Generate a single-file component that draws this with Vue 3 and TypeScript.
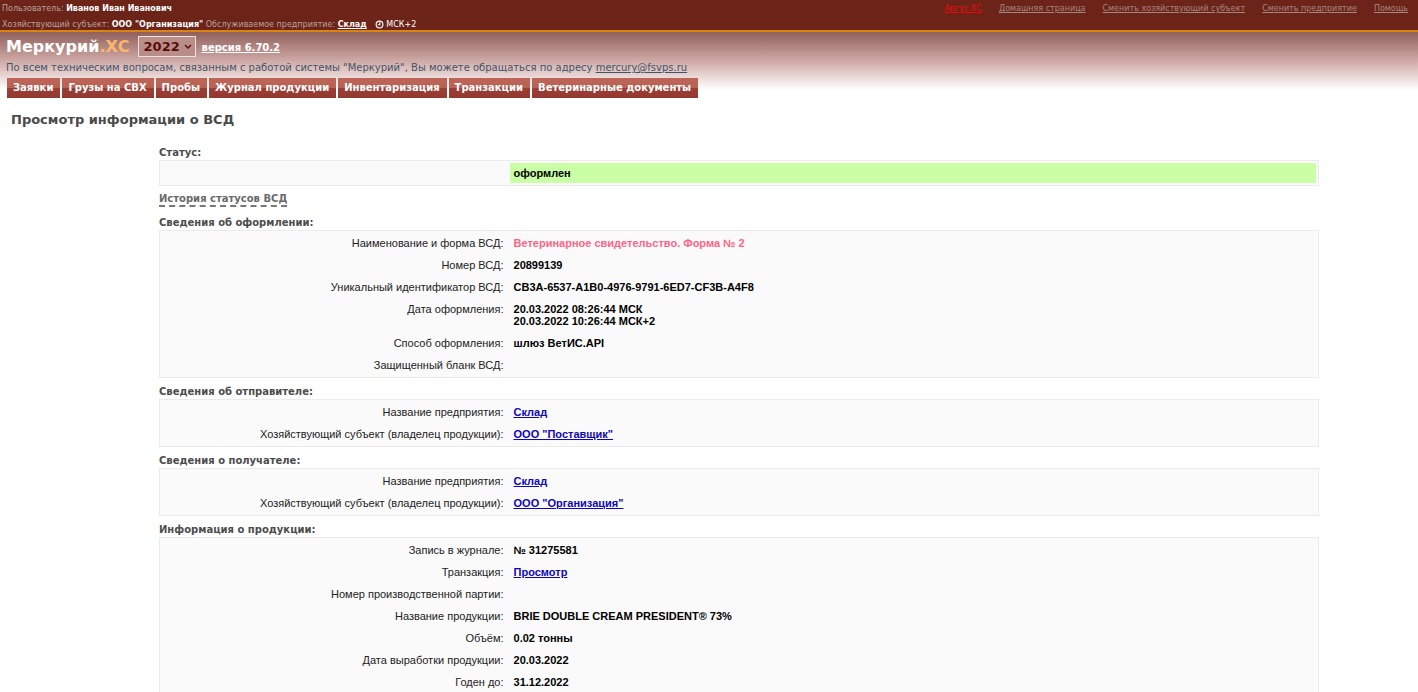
<script setup lang="ts">
import { ref } from 'vue'

interface Row {
  label: string
  lines: string[]
  kind?: 'link' | 'form' | 'status'
}

interface Section {
  title: string
  rows: Row[]
}

const year = ref('2022')
const years = ['2022', '2021', '2020']

const serviceLinks = [
  { text: 'Аргус.ХС', accent: true },
  { text: 'Домашняя страница', accent: false },
  { text: 'Сменить хозяйствующий субъект', accent: false },
  { text: 'Сменить предприятие', accent: false },
  { text: 'Помощь', accent: false },
]

const menu = [
  'Заявки',
  'Грузы на СВХ',
  'Пробы',
  'Журнал продукции',
  'Инвентаризация',
  'Транзакции',
  'Ветеринарные документы',
]

const status: Section = {
  title: 'Статус:',
  rows: [{ label: '', lines: ['оформлен'], kind: 'status' }],
}

const sections: Section[] = [
  {
    title: 'Сведения об оформлении:',
    rows: [
      { label: 'Наименование и форма ВСД:', lines: ['Ветеринарное свидетельство. Форма № 2'], kind: 'form' },
      { label: 'Номер ВСД:', lines: ['20899139'] },
      { label: 'Уникальный идентификатор ВСД:', lines: ['CB3A-6537-A1B0-4976-9791-6ED7-CF3B-A4F8'] },
      { label: 'Дата оформления:', lines: ['20.03.2022 08:26:44 МСК', '20.03.2022 10:26:44 МСК+2'] },
      { label: 'Способ оформления:', lines: ['шлюз ВетИС.API'] },
      { label: 'Защищенный бланк ВСД:', lines: [] },
    ],
  },
  {
    title: 'Сведения об отправителе:',
    rows: [
      { label: 'Название предприятия:', lines: ['Склад'], kind: 'link' },
      { label: 'Хозяйствующий субъект (владелец продукции):', lines: ['ООО "Поставщик"'], kind: 'link' },
    ],
  },
  {
    title: 'Сведения о получателе:',
    rows: [
      { label: 'Название предприятия:', lines: ['Склад'], kind: 'link' },
      { label: 'Хозяйствующий субъект (владелец продукции):', lines: ['ООО "Организация"'], kind: 'link' },
    ],
  },
  {
    title: 'Информация о продукции:',
    rows: [
      { label: 'Запись в журнале:', lines: ['№ 31275581'] },
      { label: 'Транзакция:', lines: ['Просмотр'], kind: 'link' },
      { label: 'Номер производственной партии:', lines: [] },
      { label: 'Название продукции:', lines: ['BRIE DOUBLE CREAM PRESIDENT® 73%'] },
      { label: 'Объём:', lines: ['0.02 тонны'] },
      { label: 'Дата выработки продукции:', lines: ['20.03.2022'] },
      { label: 'Годен до:', lines: ['31.12.2022'] },
    ],
  },
]
</script>

<template>
  <div class="page">
    <header>
      <div class="topbar">
        <div class="user">
          <div>Пользователь: <b>Иванов Иван Иванович</b></div>
          <div>
            Хозяйствующий субъект: <b>ООО "Организация"</b> Обслуживаемое предприятие:
            <a class="place" href="#">Склад</a>
            <span class="zone">
              <svg viewBox="0 0 16 16" aria-hidden="true">
                <circle cx="8" cy="8" r="6" />
                <path d="M8.5 4v4.5H5" />
              </svg>
              МСК+2
            </span>
          </div>
        </div>
        <nav class="service">
          <a v-for="l in serviceLinks" :key="l.text" href="#" :class="{ accent: l.accent }">{{ l.text }}</a>
        </nav>
      </div>

      <div class="banner">
        <div class="brand">
          <span class="logo">Меркурий<span>.ХС</span></span>
          <span class="year">
            <select v-model="year" aria-label="Год">
              <option v-for="y in years" :key="y">{{ y }}</option>
            </select>
            <svg viewBox="0 0 8 6" aria-hidden="true"><path d="M1 1l3 3 3-3" /></svg>
          </span>
          <a class="version" href="#">версия 6.70.2</a>
        </div>
        <p class="support">
          По всем техническим вопросам, связанным с работой системы "Меркурий", Вы можете обращаться по адресу
          <a href="mailto:mercury@fsvps.ru">mercury@fsvps.ru</a>
        </p>
        <nav class="menu">
          <a v-for="m in menu" :key="m" href="#">{{ m }}</a>
        </nav>
      </div>
    </header>

    <main>
      <h1>Просмотр информации о ВСД</h1>
      <div class="content">
        <section>
          <h2>{{ status.title }}</h2>
          <table>
            <tbody>
              <tr v-for="(r, i) in status.rows" :key="i">
                <th scope="row">{{ r.label }}</th>
                <td class="status">{{ r.lines[0] }}</td>
              </tr>
            </tbody>
          </table>
        </section>

        <div class="history"><a href="#">История статусов ВСД</a></div>

        <section v-for="s in sections" :key="s.title">
          <h2>{{ s.title }}</h2>
          <table>
            <tbody>
              <tr v-for="r in s.rows" :key="r.label">
                <th scope="row">{{ r.label }}</th>
                <td :class="r.kind">
                  <a v-if="r.kind === 'link'" href="#">{{ r.lines[0] }}</a>
                  <template v-else>
                    <div v-for="line in r.lines" :key="line">{{ line }}</div>
                  </template>
                </td>
              </tr>
            </tbody>
          </table>
        </section>
      </div>
    </main>
  </div>
</template>

<style>
html {
  background: #fff;
}
</style>

<style scoped>
.page {
  height: 100vh;
  overflow: hidden;
  font-family: Verdana, "DejaVu Sans", sans-serif;
  color: #444;
}
.topbar {
  display: flex;
  justify-content: space-between;
  box-sizing: border-box;
  height: 32px;
  padding: 1px 10px 0 2px;
  background: #6c2418;
  border-bottom: 2px solid #d8840f;
  color: #b9a19c;
  font-size: 8px;
  line-height: 16px;
  white-space: nowrap;
}
.topbar b,
.place,
.zone {
  color: #fff;
}
.place {
  font-weight: bold;
}
.zone {
  margin-left: 8px;
}
.zone svg {
  width: 9px;
  height: 9px;
  vertical-align: -2px;
  fill: none;
  stroke: #fff;
  stroke-width: 2;
}
.service {
  display: flex;
  gap: 17px;
}
.service a {
  color: #a58680;
}
.service .accent {
  color: #f00808;
}
.banner {
  background: linear-gradient(#8f5f5b, #cfaaa6 50%, #fff) no-repeat 0 0 / 100% 58px;
  padding: 4px 6px 0;
}
.brand {
  display: flex;
  align-items: center;
  height: 21px;
}
.logo {
  color: #fff;
  font-size: 16px;
  font-weight: bold;
  line-height: 20px;
}
.logo span {
  color: #ffb56b;
}
.year {
  position: relative;
  margin: 0 6px 0 8px;
}
.year select {
  display: block;
  appearance: none;
  box-sizing: border-box;
  width: 58px;
  height: 21px;
  padding: 0 0 0 5px;
  border: 1px solid #eee0de;
  border-radius: 0;
  background: #b98e89;
  color: #5c0c08;
  font: bold 13px/18px Verdana, "DejaVu Sans", sans-serif;
}
.year svg {
  position: absolute;
  right: 4px;
  top: 8px;
  width: 8px;
  height: 6px;
  fill: none;
  stroke: #5c0c08;
  stroke-width: 1.5;
  pointer-events: none;
}
.version {
  color: #fff;
  font-size: 10px;
  font-weight: bold;
  line-height: 14px;
  padding-top: 3px;
}
.support {
  margin: 4px 0;
  font-size: 10px;
  line-height: 13px;
  color: #435468;
}
.support a {
  color: #435468;
}
.menu {
  display: flex;
  gap: 2px;
  padding-left: 1px;
}
.menu a {
  padding: 0 7px 0 6px;
  background: linear-gradient(#bc6557, #b86256 50%, #9c3f36 50%, #933830);
  color: #fff;
  font-size: 10px;
  font-weight: bold;
  line-height: 20px;
  text-decoration: none;
  white-space: nowrap;
}
h1 {
  margin: 12px 11px 16px;
  font-size: 13px;
  line-height: 20px;
  color: #4a4a4a;
}
.content {
  padding: 0 7% 0 159px;
}
h2 {
  margin: 0;
  font-size: 10px;
  line-height: 13px;
  color: #4c4c4c;
  padding-bottom: 1px;
}
section {
  margin-bottom: 7px;
}
.history {
  font-size: 10px;
  font-weight: bold;
  line-height: 12px;
  margin-bottom: 9px;
}
.history a {
  display: inline-block;
  color: #6a6a6a;
  text-decoration: none;
  border-bottom: 2px dashed #777;
}
table {
  width: 100%;
  table-layout: fixed;
  border: 1px solid #ebebeb;
  border-spacing: 2px;
  background: #fafafa;
  font: 11px/12px Arial, "Liberation Sans", sans-serif;
}
th,
td {
  vertical-align: top;
  padding: 4px;
  height: 12px;
}
th {
  width: 30%;
  box-sizing: border-box;
  font-weight: normal;
  text-align: right;
  color: #222;
}
td {
  font-weight: bold;
  color: #000;
}
td a {
  color: #0e06b8;
}
.form {
  color: #ff6484;
}
.status {
  background: #caffa6;
}
</style>
